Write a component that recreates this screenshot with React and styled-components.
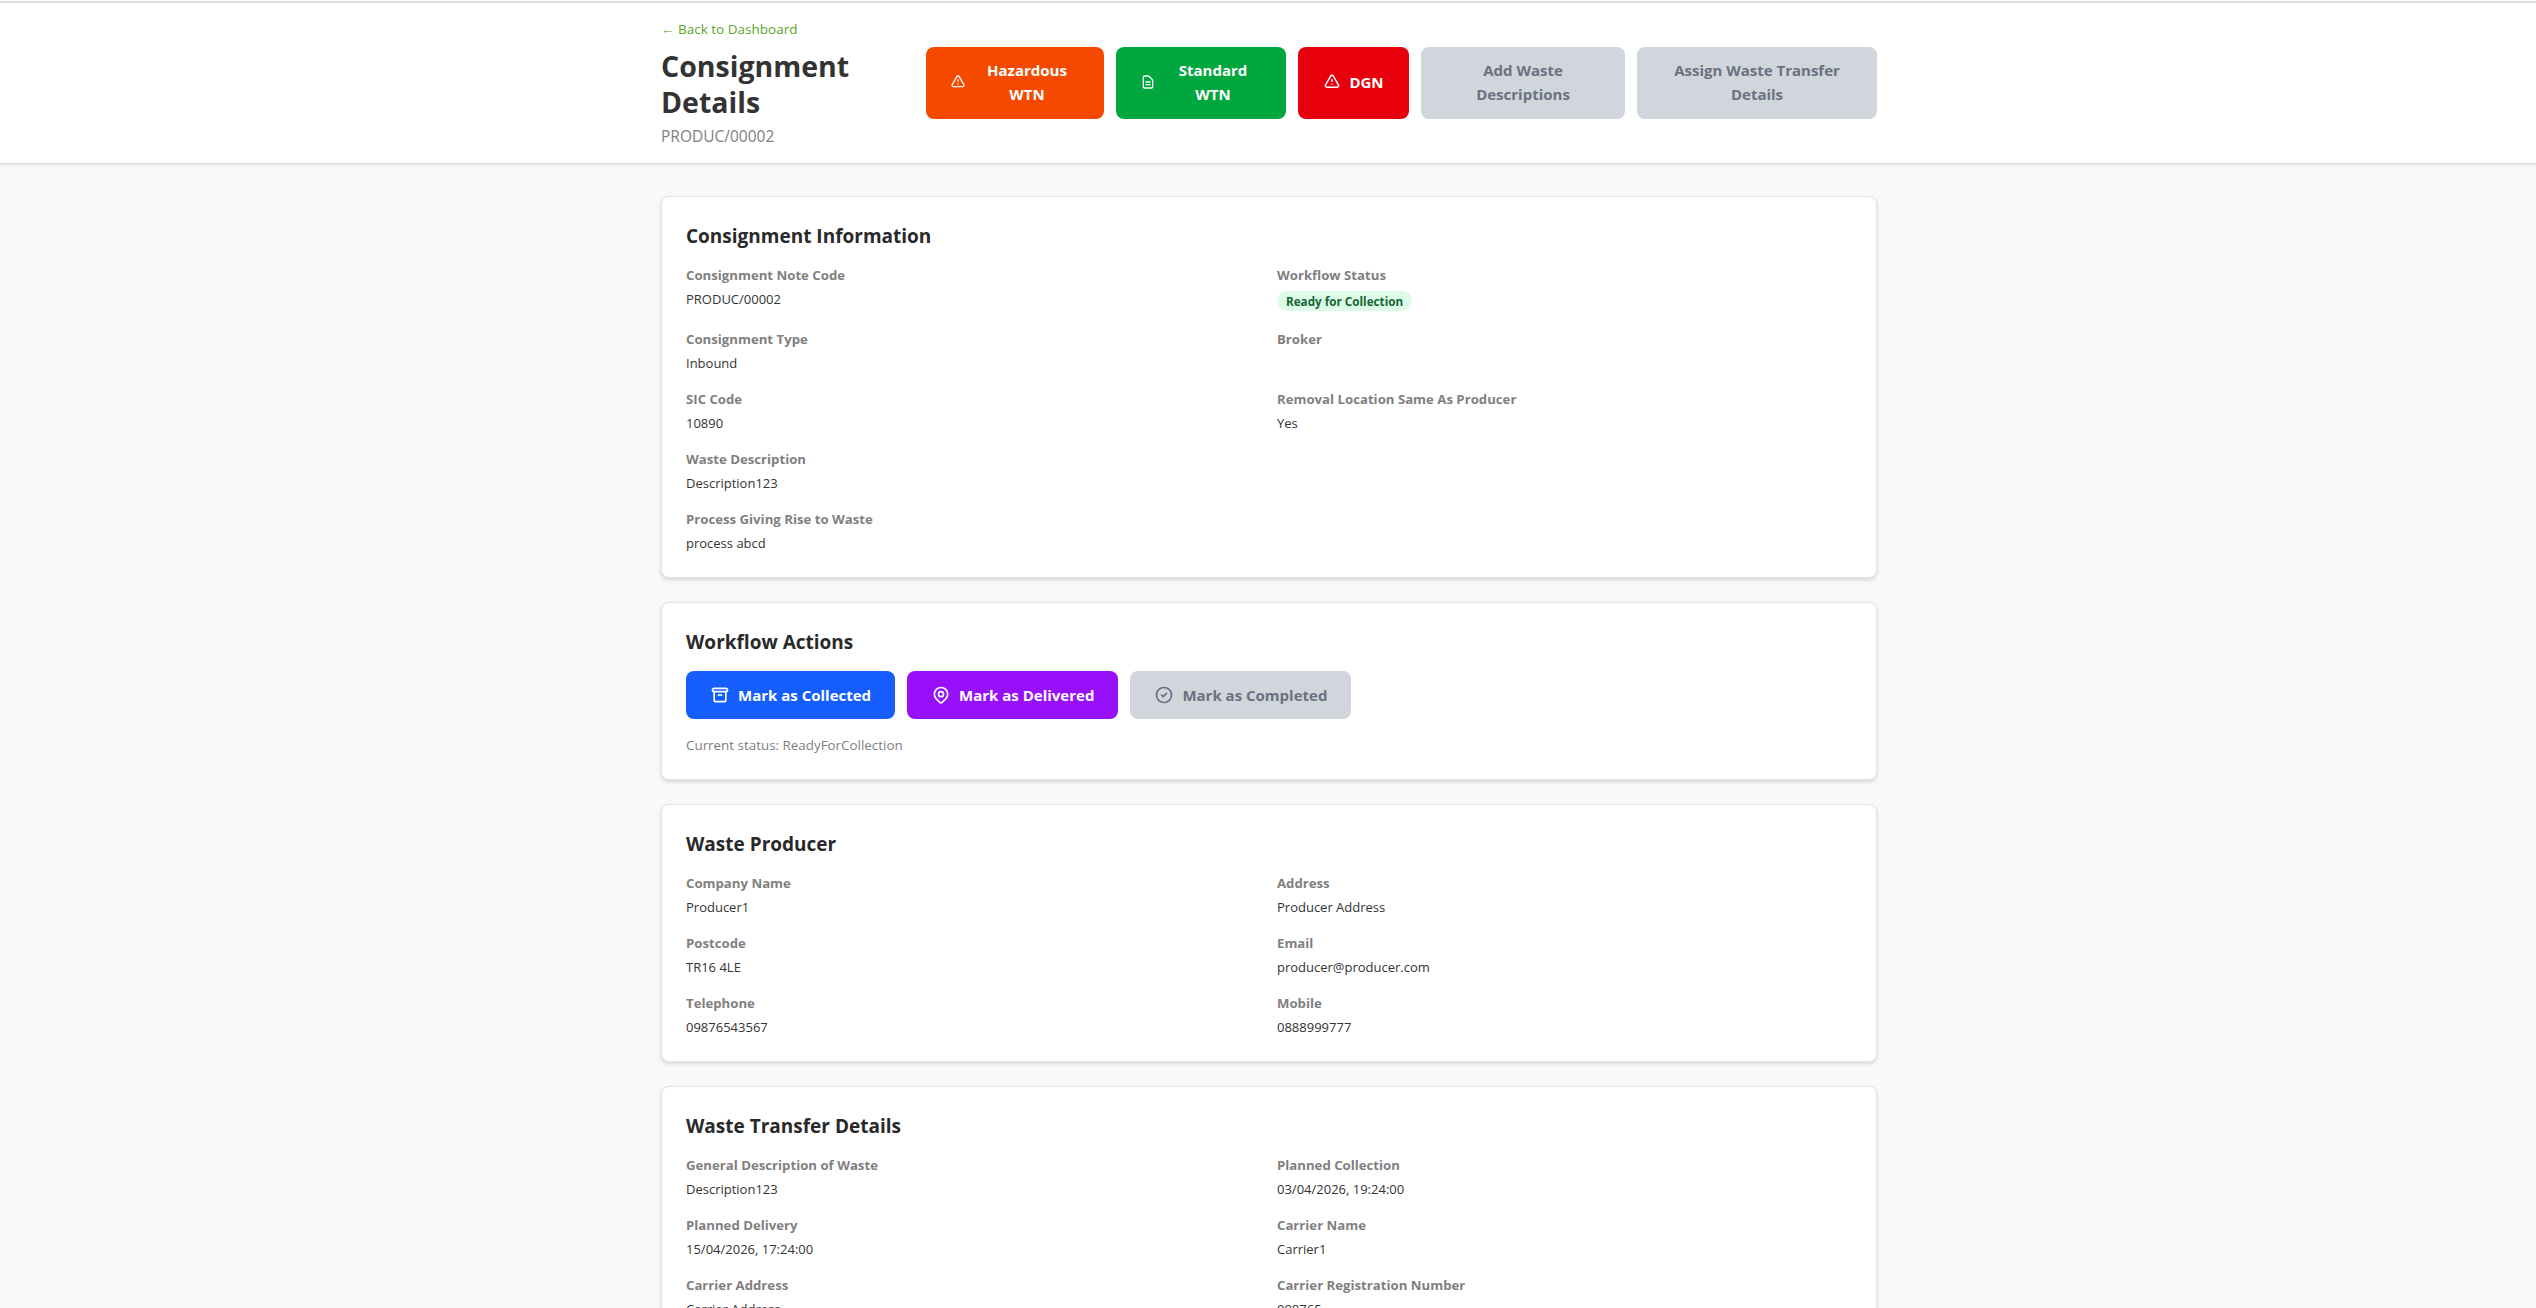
import React from "react";
import styled, { createGlobalStyle } from "styled-components";
import {
  HiOutlineExclamation,
  HiOutlineDocumentText,
  HiOutlineArchive,
  HiOutlineLocationMarker,
  HiOutlineCheckCircle,
} from "react-icons/hi";

const GlobalStyle = createGlobalStyle`
  html, body {
    margin: 0;
    padding: 0;
    height: 100%;
    overflow: hidden;
    background: #f9f9f9;
  }
  body {
    font-family: "Open Sans", "Noto Sans", "Liberation Sans", sans-serif;
    color: #222;
  }
`;

const Page = styled.div`
  height: 1308px;
  overflow: hidden;
  background: #f9f9f9;
`;

const Header = styled.header`
  background: #fff;
  padding-top: 1px;
  box-shadow: 0 1px 3px rgba(0, 0, 0, 0.18);
`;

const TopLine = styled.div`
  height: 2px;
  background: #dcdcdc;
`;

const HeaderInner = styled.div`
  width: 1216px;
  margin: 0 auto;
  padding: 16px 0 15px 2px;
  display: flex;
  align-items: center;
  justify-content: space-between;
`;

const TitleBlock = styled.div`
  width: 240px;
`;

const BackLink = styled.a`
  display: block;
  font-size: 13.5px;
  line-height: 20px;
  font-weight: 500;
  color: #5aa629;
  margin-bottom: 9px;
`;

const Title = styled.h1`
  margin: 0;
  font-size: 28.5px;
  line-height: 36px;
  font-weight: 700;
  color: #333;
`;

const Subtitle = styled.p`
  margin: 4px 0 0;
  font-size: 15.5px;
  line-height: 24px;
  font-weight: 400;
  color: #808080;
`;

const HeaderActions = styled.div`
  display: flex;
  gap: 12px;
  margin-bottom: 2px;
`;

const HeaderButton = styled.button`
  width: ${(p) => p.$width}px;
  height: 72px;
  display: flex;
  align-items: center;
  justify-content: center;
  gap: 8px;
  padding: 0 24px 1px;
  border: 0;
  border-radius: 8px;
  background: ${(p) => p.$bg};
  color: ${(p) => p.$fg || "#fff"};
  font-family: inherit;
  font-size: 15px;
  line-height: 24px;
  font-weight: 700;
  svg {
    flex: none;
  }
  span {
    flex: 1;
    text-align: center;
  }
`;

const Main = styled.main`
  width: 1216px;
  margin: 0 auto;
  padding: 33px 0 0 2px;
  display: flex;
  flex-direction: column;
  gap: 24px;
`;

const Card = styled.section`
  background: #fff;
  border: 1px solid #e5e5e5;
  border-radius: 8px;
  padding: 24px;
  box-shadow: 0 2px 4px rgba(0, 0, 0, 0.14);
`;

const CardTitle = styled.h2`
  margin: 0 0 15px;
  padding-top: 1px;
  font-size: 19px;
  line-height: 28px;
  font-weight: 700;
  color: #292929;
`;

const FieldGrid = styled.div`
  display: grid;
  grid-template-columns: 1fr 1fr;
  gap: 16px;
`;

const Field = styled.div`
  min-width: 0;
`;

const Label = styled.div`
  font-size: 13.2px;
  line-height: 20px;
  font-weight: 700;
  color: #808080;
  margin-bottom: 4px;
`;

const Value = styled.div`
  font-size: 13px;
  line-height: 20px;
  min-height: 20px;
  color: #333;
`;

const BadgeLine = styled.div`
  height: 24px;
  display: flex;
  align-items: center;
`;

const Badge = styled.span`
  display: inline-flex;
  align-items: center;
  height: 20px;
  padding: 0 9px;
  border-radius: 999px;
  background: #dcfce7;
  color: #166534;
  font-size: 11.7px;
  font-weight: 700;
`;

const ActionRow = styled.div`
  display: flex;
  gap: 12px;
`;

const ActionButton = styled.button`
  height: 48px;
  display: flex;
  align-items: center;
  gap: 8px;
  padding: 0 24px;
  border: 0;
  border-radius: 8px;
  background: ${(p) => p.$bg};
  color: ${(p) => p.$fg || "#fff"};
  font-family: inherit;
  font-size: 15px;
  font-weight: 700;
`;

const StatusNote = styled.p`
  margin: 16px 0 0;
  font-size: 13.4px;
  line-height: 20px;
  color: #808080;
`;

const producerFields = [
  ["Company Name", "Producer1"],
  ["Address", "Producer Address"],
  ["Postcode", "TR16 4LE"],
  ["Email", "producer@producer.com"],
  ["Telephone", "09876543567"],
  ["Mobile", "0888999777"],
];

const transferFields = [
  ["General Description of Waste", "Description123"],
  ["Planned Collection", "03/04/2026, 19:24:00"],
  ["Planned Delivery", "15/04/2026, 17:24:00"],
  ["Carrier Name", "Carrier1"],
  ["Carrier Address", "Carrier Address"],
  ["Carrier Registration Number", "098765"],
];

function Fields({ items }) {
  return (
    <FieldGrid>
      {items.map(([label, value]) => (
        <Field key={label}>
          <Label>{label}</Label>
          <Value>{value}</Value>
        </Field>
      ))}
    </FieldGrid>
  );
}

export default function App() {
  return (
    <Page>
      <GlobalStyle />
      <Header>
        <TopLine />
        <HeaderInner>
          <TitleBlock>
            <BackLink>← Back to Dashboard</BackLink>
            <Title>Consignment Details</Title>
            <Subtitle>PRODUC/00002</Subtitle>
          </TitleBlock>
          <HeaderActions>
            <HeaderButton $width={178} $bg="#f54900">
              <HiOutlineExclamation size={16} />
              <span>Hazardous WTN</span>
            </HeaderButton>
            <HeaderButton $width={170} $bg="#00a63e">
              <HiOutlineDocumentText size={16} />
              <span>Standard WTN</span>
            </HeaderButton>
            <HeaderButton $width={111} $bg="#e7000b">
              <HiOutlineExclamation size={18} />
              DGN
            </HeaderButton>
            <HeaderButton $width={204} $bg="#d1d5dc" $fg="#6a7282">
              <span>Add Waste Descriptions</span>
            </HeaderButton>
            <HeaderButton $width={240} $bg="#d1d5dc" $fg="#6a7282">
              <span>Assign Waste Transfer Details</span>
            </HeaderButton>
          </HeaderActions>
        </HeaderInner>
      </Header>
      <Main>
        <Card>
          <CardTitle>Consignment Information</CardTitle>
          <FieldGrid>
            <Field>
              <Label>Consignment Note Code</Label>
              <Value>PRODUC/00002</Value>
            </Field>
            <Field>
              <Label>Workflow Status</Label>
              <BadgeLine>
                <Badge>Ready for Collection</Badge>
              </BadgeLine>
            </Field>
            <Field>
              <Label>Consignment Type</Label>
              <Value>Inbound</Value>
            </Field>
            <Field>
              <Label>Broker</Label>
              <Value />
            </Field>
            <Field>
              <Label>SIC Code</Label>
              <Value>10890</Value>
            </Field>
            <Field>
              <Label>Removal Location Same As Producer</Label>
              <Value>Yes</Value>
            </Field>
            <Field>
              <Label>Waste Description</Label>
              <Value>Description123</Value>
            </Field>
            <Field />
            <Field>
              <Label>Process Giving Rise to Waste</Label>
              <Value>process abcd</Value>
            </Field>
          </FieldGrid>
        </Card>
        <Card>
          <CardTitle>Workflow Actions</CardTitle>
          <ActionRow>
            <ActionButton $bg="#155dfc">
              <HiOutlineArchive size={20} />
              Mark as Collected
            </ActionButton>
            <ActionButton $bg="#9810fa">
              <HiOutlineLocationMarker size={20} />
              Mark as Delivered
            </ActionButton>
            <ActionButton $bg="#d1d5dc" $fg="#6a7282">
              <HiOutlineCheckCircle size={20} />
              Mark as Completed
            </ActionButton>
          </ActionRow>
          <StatusNote>Current status: ReadyForCollection</StatusNote>
        </Card>
        <Card>
          <CardTitle>Waste Producer</CardTitle>
          <Fields items={producerFields} />
        </Card>
        <Card>
          <CardTitle>Waste Transfer Details</CardTitle>
          <Fields items={transferFields} />
        </Card>
      </Main>
    </Page>
  );
}
